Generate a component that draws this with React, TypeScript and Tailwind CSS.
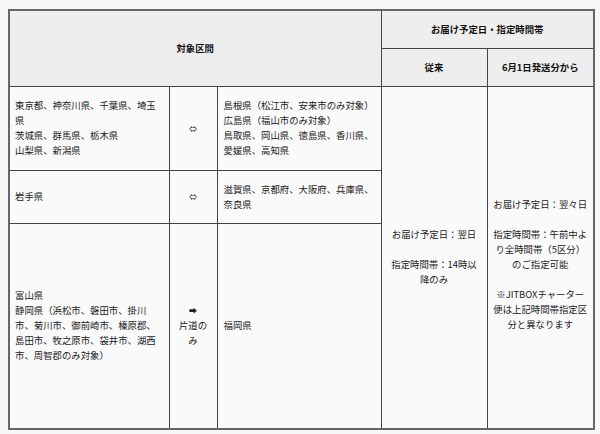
const font = { fontFamily: '"Noto Sans CJK JP", "Noto Sans", sans-serif' };

const th = "border border-[#444] bg-[#eeeeee] text-center align-middle font-bold text-[#111]";
const td = "border border-[#444] bg-[#fafafa] align-middle text-[#222]";

export default function App() {
  return (
    <div className="min-h-[434px] w-[600px] bg-[#f7f7f7] pl-[8px] pt-[9px]" style={font}>
      <table className="table-fixed border-collapse border-2 border-[#666] text-[9.4px] leading-[15px]">
        <colgroup>
          <col className="w-[160px]" />
          <col className="w-[48px]" />
          <col className="w-[164px]" />
          <col className="w-[106px]" />
          <col className="w-[107px]" />
        </colgroup>
        <thead>
          <tr className="h-[38px]">
            <th colSpan={3} rowSpan={2} className={th}>
              対象区間
            </th>
            <th colSpan={2} className={th}>
              お届け予定日・指定時間帯
            </th>
          </tr>
          <tr className="h-[38px]">
            <th className={th}>従来</th>
            <th className={th}>6月1日発送分から</th>
          </tr>
        </thead>
        <tbody>
          <tr className="h-[84px]">
            <td className={`${td} px-[5px]`}>
              東京都、神奈川県、千葉県、埼玉
              <br />
              県
              <br />
              茨城県、群馬県、栃木県
              <br />
              山梨県、新潟県
            </td>
            <td className={`${td} text-center text-[8px]`}>⇔</td>
            <td className={`${td} px-[6px]`}>
              島根県（松江市、安来市のみ対象）
              <br />
              広島県（福山市のみ対象）
              <br />
              鳥取県、岡山県、徳島県、香川県、
              <br />
              愛媛県、高知県
            </td>
            <td rowSpan={3} className={`${td} px-[4px] text-center`}>
              <p>お届け予定日：翌日</p>
              <p className="mt-[15px]">
                指定時間帯：14時以
                <br />
                降のみ
              </p>
            </td>
            <td rowSpan={3} className={`${td} px-[4px] pt-[15px] text-center`}>
              <p>お届け予定日：翌々日</p>
              <p className="mt-[15px]">
                指定時間帯：午前中よ
                <br />
                り全時間帯（5区分）
                <br />
                のご指定可能
              </p>
              <p className="mt-[15px]">
                ※JITBOXチャーター
                <br />
                便は上記時間帯指定区
                <br />
                分と異なります
              </p>
            </td>
          </tr>
          <tr className="h-[53px]">
            <td className={`${td} px-[5px]`}>岩手県</td>
            <td className={`${td} text-center text-[8px]`}>⇔</td>
            <td className={`${td} px-[6px]`}>
              滋賀県、京都府、大阪府、兵庫県、
              <br />
              奈良県
            </td>
          </tr>
          <tr className="h-[206px]">
            <td className={`${td} px-[5px]`}>
              富山県
              <br />
              静岡県（浜松市、磐田市、掛川
              <br />
              市、菊川市、御前崎市、榛原郡、
              <br />
              島田市、牧之原市、袋井市、湖西
              <br />
              市、周智郡のみ対象）
            </td>
            <td className={`${td} text-center`}>
              <span className="text-[8px]">➡</span>
              <br />
              片道の
              <br />
              み
            </td>
            <td className={`${td} px-[6px]`}>福岡県</td>
          </tr>
        </tbody>
      </table>
    </div>
  );
}
